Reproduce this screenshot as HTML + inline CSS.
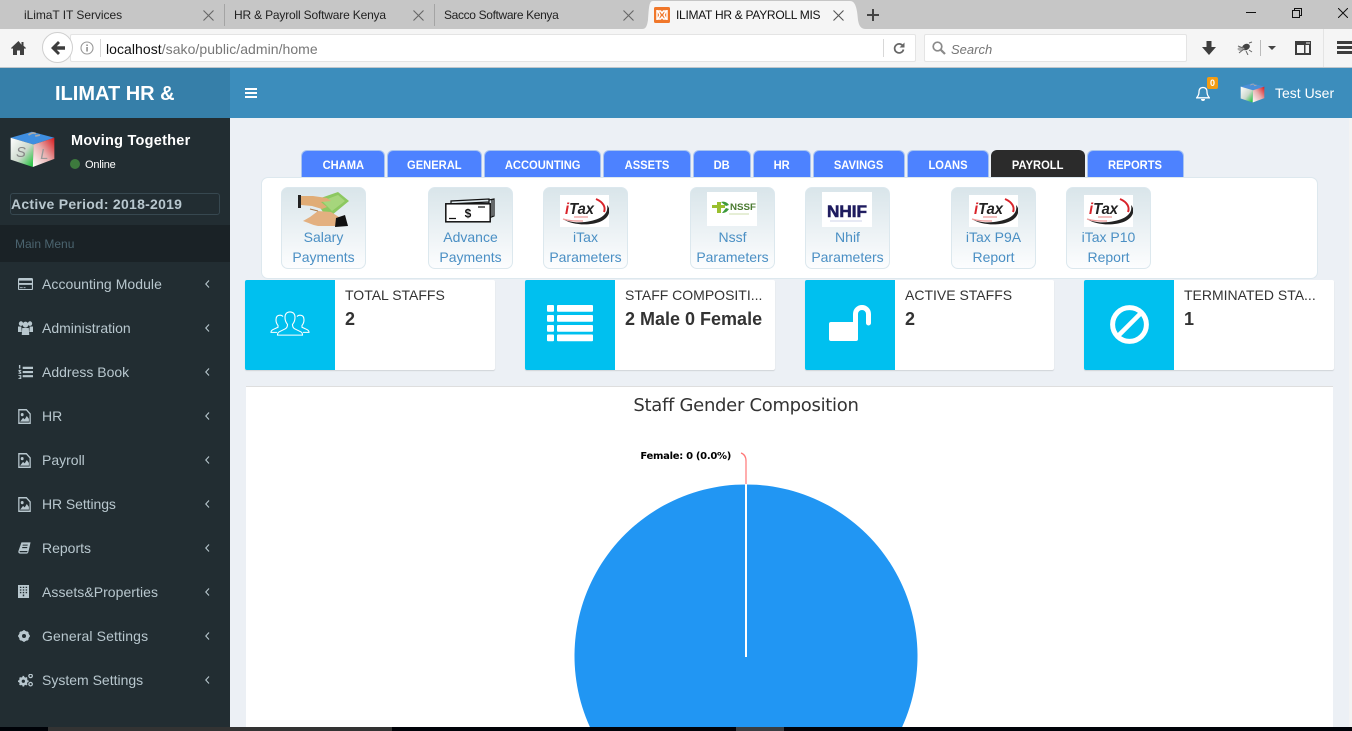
<!DOCTYPE html>
<html lang="en"><head><meta charset="utf-8"><title>ILIMAT HR &amp; PAYROLL MIS</title>
<style>
*{box-sizing:border-box}
html,body{margin:0;padding:0;width:1352px;height:731px;overflow:hidden;background:#ecf0f5;font-family:"Liberation Sans",sans-serif;color:#333}
.a{position:absolute;white-space:nowrap}
svg{position:absolute;display:block;overflow:hidden}
.bt{font-size:12px;line-height:16px;top:7px;color:#222}
.x{position:absolute;top:9px;width:13px;height:13px}
.tab{position:absolute;top:150px;height:27px;background:#4d82ff;border:1px solid #a8c4f0;border-bottom:0;border-radius:6px 6px 0 0;color:#fff;font-size:12px;font-weight:bold;text-align:center;line-height:28px}
.tab span{display:inline-block;transform:scaleX(.93)}
.tab.on{background:#2b2b2b;border-color:#2b2b2b}
.sc{position:absolute;top:187px;width:85px;height:82px;border:1px solid #dce8ee;border-radius:7px;background:linear-gradient(#d9e5ea,#fcfdfe);text-align:center;color:#4a8fc4;font-size:14px;line-height:20px;padding-top:39px}
.ib{position:absolute;top:280px;height:90px;background:#fff;border-radius:2px;box-shadow:0 1px 1px rgba(0,0,0,.12)}
.ic{position:absolute;left:0;top:0;width:90px;height:90px;background:#00c0ef;border-radius:2px 0 0 2px}
.il{position:absolute;left:100px;top:7px;font-size:14px;line-height:16px;color:#333;white-space:nowrap}
.in{position:absolute;left:100px;top:28px;font-size:18px;font-weight:bold;line-height:22px;color:#333;white-space:nowrap}
.m{position:absolute;left:42px;font-size:14px;line-height:18px;color:#b8c7ce;white-space:nowrap}
.ch{position:absolute;left:204px;width:7px;height:10px}
.si{position:absolute;left:18px}
</style></head><body>

<!-- browser chrome -->
<div class="a" style="left:0;top:0;width:1352px;height:29px;background:#c6c6c6"></div>
<div class="a" style="left:0;top:29px;width:1352px;height:38px;background:#f5f5f5"></div>
<div class="a" style="left:0;top:67px;width:1352px;height:1px;background:#bfc6cb"></div>

<div class="a bt" style="left:24px;letter-spacing:-.05px">iLimaT IT Services</div>
<div class="a bt" style="left:234px;letter-spacing:-.18px">HR &amp; Payroll Software Kenya</div>
<div class="a bt" style="left:444px;letter-spacing:-.35px">Sacco Software Kenya</div>
<div class="a" style="left:224px;top:4px;width:1px;height:22px;background:#a4a4a4"></div>
<div class="a" style="left:434px;top:4px;width:1px;height:22px;background:#a4a4a4"></div>
<svg class="x" style="left:202px" viewBox="0 0 13 13"><path d="M1.5 1.5l10 10M11.5 1.5l-10 10" stroke="#666" stroke-width="1.1" fill="none"/></svg>
<svg class="x" style="left:412px" viewBox="0 0 13 13"><path d="M1.5 1.5l10 10M11.5 1.5l-10 10" stroke="#666" stroke-width="1.1" fill="none"/></svg>
<svg class="x" style="left:622px" viewBox="0 0 13 13"><path d="M1.5 1.5l10 10M11.5 1.5l-10 10" stroke="#666" stroke-width="1.1" fill="none"/></svg>
<svg style="left:642px;top:1px" width="224" height="28" viewBox="0 0 224 28"><path d="M0 28c4 0 5-3 6-9C7 6 7 0 11 0H208C213 0 215 6 216 19 217 25 219 28 224 28z" fill="#f5f5f5"/></svg>
<svg style="left:654px;top:7px" width="16" height="16" viewBox="0 0 16 16"><rect width="16" height="16" rx="1.5" fill="#f0772a"/><path d="M4 4h2.5l1.5 2 1.5-2H12l-2 4 2 4H9.500L8 10l-1.500 2H4l2-4zM3 3v10M13 3v10" stroke="#fff" stroke-width="1.500" fill="none"/></svg>
<div class="a bt" style="left:676px;letter-spacing:-.28px;color:#111">ILIMAT HR &amp; PAYROLL MIS</div>
<svg class="x" style="left:832px" viewBox="0 0 13 13"><path d="M1.500 1.500l10 10M11.500 1.500l-10 10" stroke="#555" stroke-width="1.100" fill="none"/></svg>
<svg style="left:867px;top:9px" width="12" height="12" viewBox="0 0 12 12"><path d="M6 0v12M0 6h12" stroke="#444" stroke-width="2"/></svg>
<div class="a" style="left:1246px;top:12px;width:10px;height:1px;background:#111"></div>
<svg style="left:1292px;top:8px" width="10" height="10" viewBox="0 0 10 10"><path d="M.5 2.500h7v7h-7zM2.500 2.500v-2h7v7h-2" fill="none" stroke="#111"/></svg>
<svg style="left:1338px;top:8px" width="10" height="10" viewBox="0 0 10 10"><path d="M0 0l10 10M10 0L0 10" stroke="#111" stroke-width="1"/></svg>

<svg style="left:11px;top:41px" width="15" height="14" viewBox="0 0 15 14"><path d="M7.500 0L0 7l1 1 1-.9V14h4V9.500h3V14h4V7.100l1 .9 1-1-2.500-2.300V1h-2v2.800z" fill="#404040"/></svg>
<div class="a" style="left:70px;top:34px;width:846px;height:28px;background:#fff;border:1px solid #e4e4e4;border-radius:2px"></div>
<div class="a" style="left:42px;top:32px;width:31px;height:31px;border-radius:50%;background:#fff;border:1px solid #cfcfcf"></div>
<svg style="left:51px;top:41px" width="14" height="14" viewBox="0 0 14 14"><path d="M7 0l2 2-3.200 3.200H14v3.600H5.800L9 12l-2 2-7-7z" fill="#3d3d3d"/></svg>
<svg style="left:80px;top:41px" width="14" height="14" viewBox="0 0 14 14"><circle cx="7" cy="7" r="6" fill="none" stroke="#999" stroke-width="1.100"/><rect x="6.300" y="6" width="1.500" height="4.500" fill="#888"/><rect x="6.300" y="3.500" width="1.500" height="1.500" fill="#888"/></svg>
<div class="a" style="left:100px;top:39px;width:1px;height:18px;background:#d8d8d8"></div>
<div class="a" style="left:106px;top:41px;font-size:14px;line-height:16px;color:#777;letter-spacing:.05px"><span style="color:#111">localhost</span>/sako/public/admin/home</div>
<div class="a" style="left:883px;top:39px;width:1px;height:18px;background:#d8d8d8"></div>
<svg style="left:893px;top:42px" width="12" height="12" viewBox="0 0 12 12"><path d="M10.200 4.500A4.500 4.500 0 1 0 10.500 7.500" fill="none" stroke="#666" stroke-width="1.700"/><path d="M11.500 0.500v5h-5z" fill="#666"/></svg>
<div class="a" style="left:924px;top:34px;width:263px;height:28px;background:#fff;border:1px solid #e4e4e4;border-radius:2px"></div>
<svg style="left:932px;top:41px" width="14" height="14" viewBox="0 0 14 14"><circle cx="5.500" cy="5.500" r="4.300" fill="none" stroke="#8a8a8a" stroke-width="1.700"/><path d="M8.800 8.800L13 13" stroke="#8a8a8a" stroke-width="2.200"/></svg>
<div class="a" style="left:951px;top:42px;font-size:13px;line-height:16px;font-style:italic;color:#757575">Search</div>
<svg style="left:1202px;top:41px" width="14" height="14" viewBox="0 0 14 14"><path d="M4.500 0h5v6H14l-7 8-7-8h4.500z" fill="#3d3d3d"/></svg>
<svg style="left:1237px;top:41px" width="16" height="14" viewBox="0 0 16 14"><ellipse cx="9" cy="6" rx="4" ry="3" fill="#444" transform="rotate(-25 9 6)"/><ellipse cx="4" cy="8" rx="3.500" ry="2" fill="#aaa"/><path d="M1 5l5 2M2 12l5-4M9 10l2 4M12 2l3-1M12 9l3 2" stroke="#666" stroke-width="1"/></svg>
<div class="a" style="left:1260px;top:40px;width:1px;height:16px;background:#bbb"></div>
<svg style="left:1268px;top:46px" width="8" height="4" viewBox="0 0 8 4"><path d="M0 0h8L4 4z" fill="#444"/></svg>
<svg style="left:1295px;top:41px" width="16" height="14" viewBox="0 0 16 14"><path d="M1 1h14v12H1z" fill="none" stroke="#3d3d3d" stroke-width="2"/><path d="M0 0h16v4H0z" fill="#3d3d3d"/><path d="M9 2h1.500v11H9z" fill="#3d3d3d"/><path d="M11.500 1h1v2h-1zM13.500 1h1v2h-1z" fill="#f5f5f5"/></svg>
<div class="a" style="left:1323px;top:29px;width:1px;height:38px;background:#e4e4e4"></div>
<svg style="left:1337px;top:41px" width="15" height="13" viewBox="0 0 15 13"><path d="M0 0h15v3H0zM0 5h15v3H0zM0 10h15v3H0z" fill="#3d3d3d"/></svg>

<!-- app header -->
<div class="a" style="left:0;top:68px;width:230px;height:50px;background:#367fa9;color:#fff;font-size:20px;font-weight:bold;line-height:50px;padding-left:55px;padding-top:1px">ILIMAT HR &amp;</div>
<div class="a" style="left:230px;top:68px;width:1122px;height:50px;background:#3c8dbc"></div>
<svg style="left:245px;top:88px" width="12" height="10" viewBox="0 0 12 10"><path d="M0 0h12v2H0zM0 4h12v2H0zM0 8h12v2H0z" fill="#fff"/></svg>
<svg style="left:1196px;top:86px" width="14" height="15" viewBox="0 0 14 15"><path d="M7 1.500c-3 0-4 2-4 4.500 0 3-1.200 4.500-2.300 5.800h12.600C12.200 10.500 11 9 11 6c0-2.500-1-4.500-4-4.500z" fill="none" stroke="#fff" stroke-width="1.300"/><path d="M5 13a2 2 0 0 0 4 0z" fill="#fff"/></svg>
<div class="a" style="left:1207px;top:77px;width:11px;height:12px;background:#f39c12;border-radius:2px;color:#fff;font-size:9px;font-weight:bold;line-height:12px;text-align:center">0</div>

<!-- sidebar -->
<div class="a" style="left:0;top:118px;width:230px;height:609px;background:#222d32"></div>
<svg style="left:10px;top:131px" width="45" height="37" viewBox="30 35 134 110"><defs><linearGradient id="g1" x1="0" y1="0" x2="1" y2="1"><stop offset="0" stop-color="#fff"/><stop offset=".55" stop-color="#ccd8cc"/><stop offset="1" stop-color="#0fc02c"/></linearGradient><linearGradient id="g2" x1="0" y1="1" x2="1" y2="0"><stop offset="0" stop-color="#fff"/><stop offset=".5" stop-color="#e8b0b0"/><stop offset="1" stop-color="#d81a1e"/></linearGradient></defs><path d="M32 55L95 37l67 18-62 20z" fill="#3f8ee0"/><path d="M32 55l68 20-2 67-66-22z" fill="url(#g1)"/><path d="M100 75l62-20v63l-64 24z" fill="url(#g2)"/><path d="M85 47c8-6 16-8 22-4M105 50l14-3" stroke="#aaa" stroke-width="5" fill="none"/><text x="48" y="113" font-family="Liberation Sans" font-style="italic" font-size="44" fill="#888">S</text><text x="120" y="118" font-family="Liberation Sans" font-style="italic" font-size="44" fill="#999">L</text></svg>
<svg style="left:1240px;top:83px" width="25" height="20" viewBox="30 35 134 110"><path d="M32 55L95 37l67 18-62 20z" fill="#4b8fd8"/><path d="M32 55l68 20-2 67-66-22z" fill="url(#g1)"/><path d="M100 75l62-20v63l-64 24z" fill="url(#g2)"/><path d="M85 47c8-6 16-8 22-4M105 50l14-3" stroke="#aaa" stroke-width="5" fill="none"/></svg>
<div class="a" style="left:1275px;top:85px;font-size:14px;line-height:16px;color:#fff">Test User</div>
<div class="a" style="left:71px;top:133px;font-size:14.500px;font-weight:bold;line-height:16px;color:#fff;letter-spacing:.25px">Moving Together</div>
<div class="a" style="left:70px;top:159px;width:10px;height:10px;border-radius:50%;background:#3d7a3d"></div>
<div class="a" style="left:85px;top:159px;font-size:11px;line-height:13px;color:#fff;letter-spacing:-.2px">Online</div>
<div class="a" style="left:10px;top:193px;width:210px;height:22px;border:1px solid #374850;border-radius:3px"></div>
<div class="a" style="left:11px;top:196px;font-size:14px;font-weight:bold;line-height:16px;color:#b8c7ce;letter-spacing:.26px">Active Period: 2018-2019</div>
<div class="a" style="left:0;top:225px;width:230px;height:37px;background:#1a2226;color:#4b646f;font-size:12px;line-height:38px;padding-left:15px">Main Menu</div>

<div class="m" style="top:275px;letter-spacing:.05px">Accounting Module</div>
<div class="m" style="top:319px">Administration</div>
<div class="m" style="top:363px">Address Book</div>
<div class="m" style="top:407px">HR</div>
<div class="m" style="top:451px">Payroll</div>
<div class="m" style="top:495px;letter-spacing:-.08px">HR Settings</div>
<div class="m" style="top:539px">Reports</div>
<div class="m" style="top:583px;letter-spacing:.05px">Assets&amp;Properties</div>
<div class="m" style="top:627px;letter-spacing:.12px">General Settings</div>
<div class="m" style="top:671px">System Settings</div>

<svg class="ch" style="top:279px" viewBox="0 0 7 10"><path d="M5 1.500L1.800 5 5 8.500" fill="none" stroke="#b8c7ce" stroke-width="1.100"/></svg>
<svg class="ch" style="top:323px" viewBox="0 0 7 10"><path d="M5 1.500L1.800 5 5 8.500" fill="none" stroke="#b8c7ce" stroke-width="1.100"/></svg>
<svg class="ch" style="top:367px" viewBox="0 0 7 10"><path d="M5 1.500L1.800 5 5 8.500" fill="none" stroke="#b8c7ce" stroke-width="1.100"/></svg>
<svg class="ch" style="top:411px" viewBox="0 0 7 10"><path d="M5 1.500L1.800 5 5 8.500" fill="none" stroke="#b8c7ce" stroke-width="1.100"/></svg>
<svg class="ch" style="top:455px" viewBox="0 0 7 10"><path d="M5 1.500L1.800 5 5 8.500" fill="none" stroke="#b8c7ce" stroke-width="1.100"/></svg>
<svg class="ch" style="top:499px" viewBox="0 0 7 10"><path d="M5 1.500L1.800 5 5 8.500" fill="none" stroke="#b8c7ce" stroke-width="1.100"/></svg>
<svg class="ch" style="top:543px" viewBox="0 0 7 10"><path d="M5 1.500L1.800 5 5 8.500" fill="none" stroke="#b8c7ce" stroke-width="1.100"/></svg>
<svg class="ch" style="top:587px" viewBox="0 0 7 10"><path d="M5 1.500L1.800 5 5 8.500" fill="none" stroke="#b8c7ce" stroke-width="1.100"/></svg>
<svg class="ch" style="top:631px" viewBox="0 0 7 10"><path d="M5 1.500L1.800 5 5 8.500" fill="none" stroke="#b8c7ce" stroke-width="1.100"/></svg>
<svg class="ch" style="top:675px" viewBox="0 0 7 10"><path d="M5 1.500L1.800 5 5 8.500" fill="none" stroke="#b8c7ce" stroke-width="1.100"/></svg>

<!-- sidebar icons -->
<svg class="si" style="top:278px" width="15" height="12" viewBox="0 0 16 14" preserveAspectRatio="none"><path d="M1.500 0h13A1.500 1.500 0 0 1 16 1.500v11a1.500 1.500 0 0 1-1.500 1.500h-13A1.500 1.500 0 0 1 0 12.500v-11A1.500 1.500 0 0 1 1.500 0zM1.200 3v2.800h13.600V3zM1.200 8v4.800h13.600V8zM2 10.800h3v1H2zM6 10.800h2v1H6z" fill="#b8c7ce" fill-rule="evenodd"/></svg>
<svg class="si" style="top:321px" width="15" height="14" viewBox="0 0 16 14" preserveAspectRatio="none"><circle cx="3.200" cy="2.600" r="2.300" fill="#b8c7ce"/><circle cx="12.800" cy="2.600" r="2.300" fill="#b8c7ce"/><circle cx="8" cy="3.600" r="3" fill="#b8c7ce"/><path d="M0 5.500h3.500L4 11H0zM12.500 5.500H16V11h-4zM4.500 7h7L12 14H4z" fill="#b8c7ce"/></svg>
<svg class="si" style="top:365px" width="15" height="14" viewBox="0 0 16 16" preserveAspectRatio="none"><path d="M5 2h11v2.500H5zM5 6.800h11v2.500H5zM5 11.500h11V14H5zM1 0h1.500v4H1zM.5 5.500h3v1.200H2L3.500 8.500V10H.5V8.800h1.500L.5 7zM.5 11.500h3V16h-3v-1h2v-.7h-1v-1h1v-.8h-2z" fill="#b8c7ce"/></svg>
<svg class="si" style="top:409px" width="13" height="15" viewBox="0 0 15.500 16" preserveAspectRatio="none"><path d="M1 .8h9l4.500 4.500v9.900H1z" fill="none" stroke="#b8c7ce" stroke-width="1.500"/><circle cx="5" cy="6" r="1.700" fill="#b8c7ce"/><path d="M2.500 13.500l3.500-4 2 1.500 2.500-3.500 2.500 3v3z" fill="#b8c7ce"/></svg>
<svg class="si" style="top:453px" width="13" height="15" viewBox="0 0 15.500 16" preserveAspectRatio="none"><path d="M1 .8h9l4.500 4.500v9.900H1z" fill="none" stroke="#b8c7ce" stroke-width="1.500"/><circle cx="5" cy="6" r="1.700" fill="#b8c7ce"/><path d="M2.500 13.500l3.500-4 2 1.500 2.500-3.500 2.500 3v3z" fill="#b8c7ce"/></svg>
<svg class="si" style="top:497px" width="13" height="15" viewBox="0 0 15.500 16" preserveAspectRatio="none"><path d="M1 .8h9l4.500 4.500v9.900H1z" fill="none" stroke="#b8c7ce" stroke-width="1.500"/><circle cx="5" cy="6" r="1.700" fill="#b8c7ce"/><path d="M2.500 13.500l3.500-4 2 1.500 2.500-3.500 2.500 3v3z" fill="#b8c7ce"/></svg>
<svg class="si" style="top:542px" width="13" height="12" viewBox="0 1 15 14" preserveAspectRatio="none"><path d="M4 1.500h10.500L12 12.500c-.3 1.300-1 2-2 2H2.500C1 14.500 0 13.500.5 11.500zM5.500 4l-.3 1.300H11l.3-1.300zM5 6.800l-.3 1.300h5.800l.3-1.300zM2 11.500c-.3 1 0 1.500 1 1.500h7.500l.5-1.500z" fill="#b8c7ce" fill-rule="evenodd"/></svg>
<svg class="si" style="top:585px" width="11" height="13" viewBox="0 1 11.500 15" preserveAspectRatio="none"><path d="M0 1h11.500v15H0zM2 3v1.500h1.500V3zM5 3v1.500h1.500V3zM8 3v1.500h1.500V3zM2 6v1.500h1.500V6zM5 6v1.500h1.500V6zM8 6v1.500h1.500V6zM2 9v1.500h1.500V9zM5 9v1.500h1.500V9zM8 9v1.500h1.500V9zM5 12v2h1.500v-2z" fill="#b8c7ce" fill-rule="evenodd"/></svg>
<svg class="si" style="top:630px" width="12" height="12" viewBox="0 2 12 12"><circle cx="6" cy="8" r="3.800" fill="none" stroke="#b8c7ce" stroke-width="3"/><path d="M6 2.200v11.600M.2 8h11.600M2 4l8 8M10 4l-8 8" stroke="#b8c7ce" stroke-width="2.200"/><circle cx="6" cy="8" r="2" fill="#222d32"/></svg>
<svg class="si" style="top:674px" width="15" height="13" viewBox="0 1.500 15.500 13.500" preserveAspectRatio="none"><circle cx="5.500" cy="9" r="3.200" fill="none" stroke="#b8c7ce" stroke-width="2.600"/><path d="M5.500 3.500v11M0 9h11M1.700 5.200l7.600 7.600M9.300 5.200l-7.600 7.600" stroke="#b8c7ce" stroke-width="1.800"/><circle cx="5.500" cy="9" r="1.700" fill="#222d32"/><circle cx="13" cy="3.500" r="1.800" fill="none" stroke="#b8c7ce" stroke-width="1.300"/><circle cx="13" cy="12" r="1.800" fill="none" stroke="#b8c7ce" stroke-width="1.300"/></svg>

<!-- module tabs -->
<div class="tab" style="left:301px;width:84px"><span>CHAMA</span></div>
<div class="tab" style="left:387px;width:95px"><span>GENERAL</span></div>
<div class="tab" style="left:484px;width:117px"><span>ACCOUNTING</span></div>
<div class="tab" style="left:603px;width:88px"><span>ASSETS</span></div>
<div class="tab" style="left:693px;width:58px"><span>DB</span></div>
<div class="tab" style="left:753px;width:58px"><span>HR</span></div>
<div class="tab" style="left:813px;width:92px"><span>SAVINGS</span></div>
<div class="tab" style="left:907px;width:82px"><span>LOANS</span></div>
<div class="tab on" style="left:991px;width:94px"><span>PAYROLL</span></div>
<div class="tab" style="left:1087px;width:97px"><span>REPORTS</span></div>

<!-- shortcut panel -->
<div class="a" style="left:261px;top:177px;width:1057px;height:102px;background:#fff;border:1px solid #dde8ee;border-radius:7px"></div>
<div class="sc" style="left:281px">Salary<br>Payments</div>
<div class="sc" style="left:428px">Advance<br>Payments</div>
<div class="sc" style="left:543px">iTax<br>Parameters</div>
<div class="sc" style="left:690px">Nssf<br>Parameters</div>
<div class="sc" style="left:805px">Nhif<br>Parameters</div>
<div class="sc" style="left:951px">iTax P9A<br>Report</div>
<div class="sc" style="left:1066px">iTax P10<br>Report</div>

<!-- salary image -->
<svg style="left:298px;top:192px" width="51" height="35" viewBox="0 0 51 35"><path d="M0 3h3v13H0z" fill="#222"/><path d="M17 8L40 0l11 9-17 14-9-3z" fill="#8cc860"/><path d="M24 9l16-6 7 6-13 10z" fill="#a6d67c"/><path d="M3 4h12l14 2 4 3-10 1 6 5-5 2-10-3-11-1z" fill="#e0ac76"/><path d="M12 25l8-6 13 1 8 5 6-1v7l-10 3H20C14 33 9 30 5 29z" fill="#e3b080"/><path d="M38 26l9-3 3 11-13 1z" fill="#111"/><path d="M12 17l8 2" stroke="#a87848" stroke-width="1"/></svg>
<!-- advance image -->
<svg style="left:445px;top:198px" width="50" height="25" viewBox="0 0 50 25"><path d="M6 6V3l38-2v4M44 2l5-1v17l-5 2M3 6l41-2M47 2v17" fill="none" stroke="#111" stroke-width="1.200"/><rect x=".8" y="5.800" width="44.400" height="18" fill="#fff" stroke="#111" stroke-width="1.500"/><text x="23" y="19.500" text-anchor="middle" font-family="Liberation Sans" font-weight="bold" font-size="12" fill="#111">$</text><path d="M4 20.500h7M33 9h7" stroke="#111" stroke-width="1.300"/></svg>

<!-- itax logos -->
<svg style="left:560px;top:195px;background:#fff" width="49" height="32" viewBox="0 0 49 32"><text x="5" y="19" font-family="Liberation Sans" font-weight="bold" font-style="italic" font-size="16" fill="#222" textLength="29" lengthAdjust="spacingAndGlyphs"><tspan fill="#d9232a">i</tspan>Tax</text><path d="M36 4c7 3 10 8 8 13" fill="none" stroke="#d9232a" stroke-width="2"/><path d="M47 10c2 9-6 15-22 17-9 1-16 0-22-3 11 8 42 8 46-6 1-3 0-6-2-8z" fill="#222"/><path d="M3 24c6 2 12 2 20 2M14 22h14" stroke="#e99" stroke-width="1.200" fill="none"/></svg>
<svg style="left:969px;top:195px;background:#fff" width="49" height="32" viewBox="0 0 49 32"><text x="5" y="19" font-family="Liberation Sans" font-weight="bold" font-style="italic" font-size="16" fill="#222" textLength="29" lengthAdjust="spacingAndGlyphs"><tspan fill="#d9232a">i</tspan>Tax</text><path d="M36 4c7 3 10 8 8 13" fill="none" stroke="#d9232a" stroke-width="2"/><path d="M47 10c2 9-6 15-22 17-9 1-16 0-22-3 11 8 42 8 46-6 1-3 0-6-2-8z" fill="#222"/><path d="M3 24c6 2 12 2 20 2M14 22h14" stroke="#e99" stroke-width="1.200" fill="none"/></svg>
<svg style="left:1084px;top:195px;background:#fff" width="49" height="32" viewBox="0 0 49 32"><text x="5" y="19" font-family="Liberation Sans" font-weight="bold" font-style="italic" font-size="16" fill="#222" textLength="29" lengthAdjust="spacingAndGlyphs"><tspan fill="#d9232a">i</tspan>Tax</text><path d="M36 4c7 3 10 8 8 13" fill="none" stroke="#d9232a" stroke-width="2"/><path d="M47 10c2 9-6 15-22 17-9 1-16 0-22-3 11 8 42 8 46-6 1-3 0-6-2-8z" fill="#222"/><path d="M3 24c6 2 12 2 20 2M14 22h14" stroke="#e99" stroke-width="1.200" fill="none"/></svg>
<!-- nssf -->
<svg style="left:707px;top:192px;background:#fff" width="50" height="34" viewBox="0 0 50 34"><path d="M5 13h5v-3h4v3h4v3h-4v5h-4v-5H5z" fill="#9abf2e"/><path d="M14 10c3-1 6 0 8 3l-3 1zM15 21c3 0 5-1 7-4l-3-1z" fill="#3d9a3a"/><text x="23" y="18" font-family="Liberation Sans" font-weight="bold" font-size="9" fill="#4a7a30" textLength="26" lengthAdjust="spacingAndGlyphs">NSSF</text><path d="M22 22h20" stroke="#dde8c8" stroke-width="1.500"/></svg>
<!-- nhif -->
<svg style="left:822px;top:192px;background:#fff" width="50" height="35" viewBox="0 0 50 35"><text x="5" y="25" font-family="Liberation Sans" font-weight="bold" font-size="17" fill="#1e1b5e" stroke="#1e1b5e" stroke-width=".6" textLength="40" lengthAdjust="spacingAndGlyphs">NHIF</text><path d="M8 29h32" stroke="#cfd3ea" stroke-width="1"/></svg>

<!-- info boxes -->
<div class="ib" style="left:245px;width:250px"><div class="ic"><svg style="left:25px;top:31px" width="40" height="26" viewBox="0 0 40 28" preserveAspectRatio="none" fill="none" stroke="#fff" stroke-width="1.100"><path d="M20 1c-3.500 0-5 2.500-5 6 0 3 1 5.500 2.500 7.500 0 2-.5 3.500-2 4.500L9 22.500c-1.500.8-1.500 2.500-1.500 3.500h25c0-1 0-2.700-1.500-3.500L24.500 19c-1.500-1-2-2.500-2-4.500C24 12.500 25 10 25 7c0-3.500-1.500-6-5-6z"/><path d="M13 6c-.8-1-2-1.500-3-1.500-2.800 0-4 2-4 5 0 2.500.8 4.500 2 6v2l-5 2.500C2 20.500 1 21.500 1 23h6"/><path d="M27 6c.8-1 2-1.500 3-1.500 2.800 0 4 2 4 5 0 2.500-.8 4.500-2 6v2l5 2.500c1 .5 2 1.500 2 3h-6"/></svg></div><div class="il">TOTAL STAFFS</div><div class="in">2</div></div>
<div class="ib" style="left:525px;width:250px"><div class="ic"><svg style="left:22px;top:25px" width="46" height="37" viewBox="0 0 46 37" fill="#fff"><rect x="0" y="0" width="7" height="6.700" rx="1"/><rect x="10" y="0" width="36" height="6.700" rx="1"/><rect x="0" y="10" width="7" height="6.700" rx="1"/><rect x="10" y="10" width="36" height="6.700" rx="1"/><rect x="0" y="20" width="7" height="6.700" rx="1"/><rect x="10" y="20" width="36" height="6.700" rx="1"/><rect x="0" y="29.500" width="7" height="6.700" rx="1"/><rect x="10" y="29.500" width="36" height="6.700" rx="1"/></svg></div><div class="il">STAFF COMPOSITI...</div><div class="in">2 Male 0 Female</div></div>
<div class="ib" style="left:805px;width:249px"><div class="ic"><svg style="left:24px;top:25px" width="43" height="37" viewBox="0 0 43 37" fill="none"><rect x="0" y="17" width="29" height="19" rx="2" fill="#fff"/><path d="M26.500 18V9A6.500 6.500 0 0 1 39.500 9V18" stroke="#fff" stroke-width="5" stroke-linecap="round"/></svg></div><div class="il">ACTIVE STAFFS</div><div class="in">2</div></div>
<div class="ib" style="left:1084px;width:250px"><div class="ic"><svg style="left:26px;top:24px" width="39" height="41" viewBox="0 0 39 41" fill="none" stroke="#fff"><circle cx="19.500" cy="20.500" r="16.900" stroke-width="5"/><path d="M8 32L31 9" stroke-width="4.500"/></svg></div><div class="il">TERMINATED STA...</div><div class="in">1</div></div>

<!-- chart -->
<div class="a" style="left:246px;top:386px;width:1087px;height:341px;background:#fff;border-top:1px solid #dedede"></div>
<div class="a" style="left:446px;top:394px;width:600px;text-align:center;font-family:'DejaVu Sans',sans-serif;font-size:18px;line-height:23px;color:#333;letter-spacing:-.3px">Staff Gender Composition</div>
<div class="a" style="left:601px;top:450px;width:130px;text-align:right;font-family:'DejaVu Sans',sans-serif;font-size:10px;font-weight:bold;line-height:14px;color:#000;letter-spacing:-.3px">Female: 0 (0.0%)</div>
<svg style="left:246px;top:386px" width="1087" height="341" viewBox="246 386 1087 341"><path d="M741 453c3 1 5 3 5 8v23" fill="none" stroke="#f77" stroke-width="1.200"/><path d="M589.900 727A171.500 171.500 0 1 1 902.100 727Z" fill="#2196f3"/><rect x="745" y="484" width="2" height="173" fill="#fff"/></svg>

<!-- page scrollbar + bottom bar -->
<div class="a" style="left:1349px;top:118px;width:3px;height:609px;background:#f3f3f3"></div>
<div class="a" style="left:0;top:727px;width:1352px;height:4px;background:#000208"></div>
<div class="a" style="left:48px;top:727px;width:344px;height:4px;background:#333"></div>
<div class="a" style="left:736px;top:727px;width:48px;height:4px;background:#3a3e42"></div>
</body></html>
